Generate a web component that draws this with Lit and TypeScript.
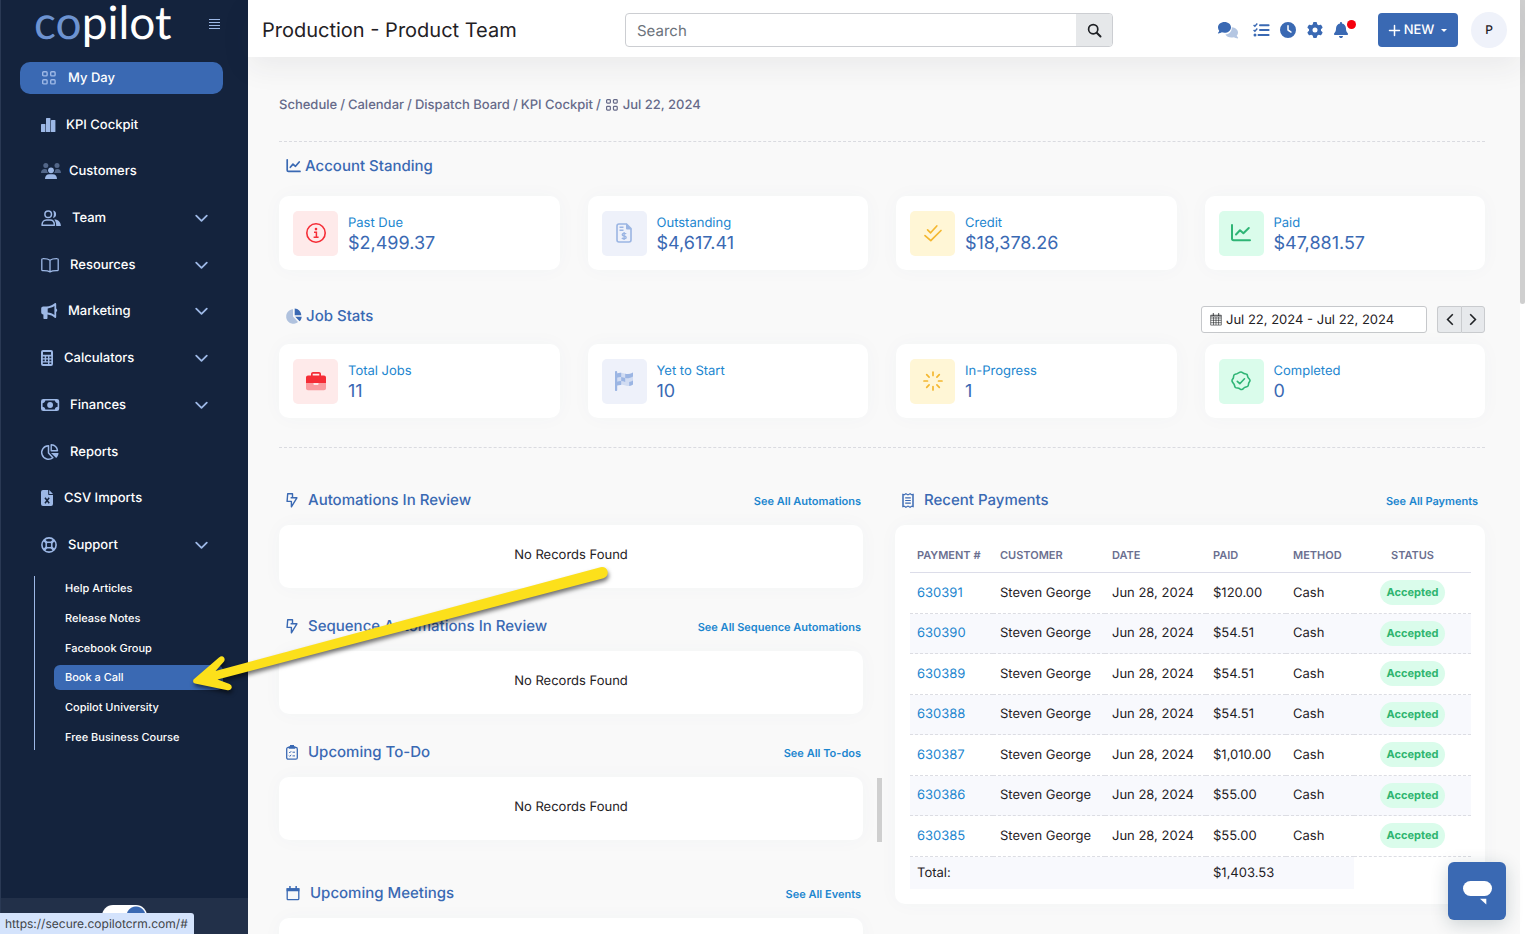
import { LitElement, html, svg, css, nothing, TemplateResult } from "lit";
import { customElement, property } from "lit/decorators.js";
import { classMap } from "lit/directives/class-map.js";

type Icon = { w: number; h: number; box?: string; art: TemplateResult };

const GRID = svg`<g fill="none" stroke="currentColor" stroke-width="1.4">
      <rect x="1.7" y="1.7" width="4.4" height="4.2" rx="1"/><rect x="9.7" y="1.7" width="4.4" height="4.2" rx="1"/>
      <rect x="1.7" y="9.7" width="4.4" height="4.2" rx="1"/><rect x="9.7" y="9.7" width="4.4" height="4.2" rx="1"/></g>`;

const ICONS: Record<string, Icon> = {
  grid: { w: 16, h: 16, art: GRID },
  gridSmall: { w: 12, h: 12, box: "1 1 14 14", art: GRID },
  bars: {
    w: 14, h: 16,
    art: svg`<g fill="currentColor"><rect x="0" y="7" width="4.4" height="8" rx=".5"/><rect x="5" y="1" width="4.4" height="14" rx=".5"/><rect x="10" y="3" width="4.4" height="12" rx=".5"/></g>`,
  },
  customers: {
    w: 17, h: 16,
    art: svg`<g fill="currentColor"><g opacity=".45"><circle cx="4.8" cy="2.6" r="2.5"/><circle cx="16" cy="2.6" r="2.5"/>
      <path d="M0 10c0-2.6 1.4-4 3.8-4 .9 0 1.8.3 2.3.8C5.9 8.200 6.500 9.300 7.200 10z"/><path d="M20 10c0-2.600-1.400-4-3.600-4-.9 0-1.800.3-2.300.8.200 1.400-.300 2.500-1.200 3.200z"/></g>
      <circle cx="10" cy="7.300" r="2.900"/><path d="M4 16c0-3 1.700-4.800 4.200-4.800h3.600c2.500 0 4.200 1.800 4.200 4.800z"/></g>`,
  },
  team: {
    w: 20, h: 16,
    art: svg`<circle cx="7.200" cy="4.200" r="3.300" fill="none" stroke="currentColor" stroke-width="1.500"/>
      <path d="M1 15.200c0-3.400 2.200-5.200 4.500-5.200h3.400c2.600 0 4.500 1.900 4.500 5.200z" fill="none" stroke="currentColor" stroke-width="1.500" stroke-linejoin="round"/>
      <path d="M12 .6a3.700 3.700 0 0 1 0 7.300c1.200-2.200 1.200-5 0-7.300zM13.200 9.400c3.700-.2 6.600 2.200 6.700 6.500h-4.700c0-2.900-.6-5-2-6.500z" fill="currentColor"/>`,
  },
  book: {
    w: 18, h: 16,
    art: svg`<path d="M9 3.200C7 1.800 4.500 1.600 1.700 1.700c-.6 0-.9.4-.9.900v10.200c0 .6.300.9.900.9 2.800-.1 5.300.1 7.300 1.200 2-1.100 4.500-1.300 7.300-1.200.6 0 .9-.3.900-.9V2.600c0-.5-.3-.9-.9-.9-2.800-.1-5.300.1-7.300 1.500zv11.500" fill="none" stroke="currentColor" stroke-width="1.300" stroke-linejoin="round"/>`,
  },
  horn: {
    w: 16, h: 16,
    art: svg`<path fill="currentColor" fill-rule="evenodd" d="M13.700.3c.7-.5 1.500-.1 1.500.7v4.600c.6.300 1 .9 1 1.700s-.4 1.400-1 1.700v5c0 .9-.8 1.200-1.500.7-2-1.700-4.300-2.900-7.200-3.200v3.500c0 .6-.4 1-1 1H3.400c-.6 0-1-.4-1-1v-3.600A2.100 2.100 0 0 1 .2 9.400V5.600c0-1.200.9-2.100 2.100-2.100h3.200c3.300 0 6-1.300 8.200-3.200zM13.400 3c-1.900 1.300-4.200 2.200-6.700 2.400v4.200c2.500.2 4.800 1.100 6.700 2.500z"/>`,
  },
  calc: {
    w: 12, h: 16,
    art: svg`<path fill="currentColor" fill-rule="evenodd" d="M2 0h8a2 2 0 0 1 2 2v12a2 2 0 0 1-2 2H2a2 2 0 0 1-2-2V2a2 2 0 0 1 2-2zM2 2v2.800h8V2zM1.800 6.500v1.700h1.900V6.500zM5.100 6.500v1.700H7V6.500zM8.400 6.500v1.700h1.900V6.500zM1.800 9.500v1.700h1.900V9.500zM5.100 9.500v1.700H7V9.500zM8.400 9.500v1.700h1.900V9.500zM1.800 12.500v1.600H7v-1.600zM8.400 12.500v1.600h1.900v-1.600z"/>`,
  },
  money: {
    w: 18, h: 16,
    art: svg`<rect x=".8" y="2.800" width="16.600" height="10.400" rx="1.500" fill="none" stroke="currentColor" stroke-width="1.600"/><circle cx="9.100" cy="8" r="2.900" fill="currentColor"/>
      <path fill="currentColor" d="M1 3h3.400C4.400 5 3 6.200 1 6.200zM17.200 3h-3.400c0 2 1.400 3.200 3.400 3.200zM1 13h3.400C4.400 11 3 9.800 1 9.800zM17.200 13h-3.400c0-2 1.400-3.200 3.400-3.200z"/>`,
  },
  pie: {
    w: 18, h: 16,
    art: svg`<path d="M7.500 1.700a6.800 6.800 0 1 0 4.400 12L7.500 9z" fill="none" stroke="currentColor" stroke-width="1.500" stroke-linejoin="round"/>
      <path d="M10.200.8c3.300.3 5.900 2.700 6.300 5.900h-6.300z" fill="none" stroke="currentColor" stroke-width="1.400" stroke-linejoin="round"/><path d="M10 9h7.500c-.1 2-.9 3.700-2.300 5.100z" fill="currentColor"/>`,
  },
  csv: {
    w: 12, h: 16,
    art: svg`<path fill="currentColor" d="M2 0h5.200v4c0 .6.400 1 1 1H12v9a2 2 0 0 1-2 2H2a2 2 0 0 1-2-2V2a2 2 0 0 1 2-2zM8.200 0 12 4H8.200z"/><path d="m4 7.700 4.200 5.600M8.200 7.700 4 13.300" stroke="#14233d" stroke-width="1.500"/>`,
  },
  life: {
    w: 16, h: 16,
    art: svg`<g fill="none" stroke="currentColor"><circle cx="8" cy="8" r="7.100" stroke-width="1.600"/><rect x="5.200" y="5.200" width="5.600" height="5.600" rx="1.500" stroke-width="1.500"/><path d="m2.800 2.800 3 3m4.400 4.400 3 3m0-10.400-3 3m-4.400 4.400-3 3" stroke-width="2.400"/></g>`,
  },
  chevron: { w: 13, h: 8, art: svg`<path d="m1.200 1.600 5.300 5.300 5.300-5.300" fill="none" stroke="currentColor" stroke-width="1.800" stroke-linecap="round" stroke-linejoin="round"/>` },
  menu: { w: 12, h: 12, art: svg`<path d="M0 1.500h11M0 4.500h11M0 7.500h11M0 10.500h11" stroke="currentColor" stroke-width="1.200"/>` },
  search: { w: 15, h: 15, art: svg`<circle cx="6.200" cy="6.200" r="4.600" fill="none" stroke="currentColor" stroke-width="1.700"/><path d="m9.700 9.700 3.800 3.800" stroke="currentColor" stroke-width="2" stroke-linecap="round"/>` },
  chats: {
    w: 20, h: 17,
    art: svg`<path fill="currentColor" opacity=".38" d="M13.800 5.200c3.500.2 6.200 2.500 6.200 5.200 0 1.200-.5 2.200-1.300 3.100.2.800.7 1.500 1.300 2.100.3.300.1.800-.3.800-1.400 0-2.700-.5-3.700-1.200-.8.300-1.700.4-2.600.4-2.700 0-5-1.300-6-3.100 3.700-.2 6.700-3.100 6.400-7.300z"/>
      <path fill="currentColor" d="M6.500 0c3.600 0 6.500 2.400 6.500 5.400s-2.900 5.400-6.500 5.400c-1 0-1.900-.2-2.700-.5-1 .7-2.200 1.200-3.500 1.200-.4 0-.5-.4-.3-.7.600-.6 1-1.300 1.200-2.100C.400 7.800 0 6.600 0 5.400 0 2.400 2.900 0 6.500 0z"/>`,
  },
  checklist: {
    w: 16, h: 14,
    art: svg`<path d="M7 2.200h8.600M7 7h8.600M5.500 11.900h10.100" stroke="currentColor" stroke-width="2" stroke-linecap="round"/><path d="m.6 1.900 1.300 1.300L4.300.5M.6 6.900l1.300 1.300 2.400-2.700" fill="none" stroke="currentColor" stroke-width="1.400"/><circle cx="2" cy="11.900" r="1.500" fill="currentColor"/>`,
  },
  clock: { w: 16, h: 16, box: "0 0 512 512", art: svg`<path fill="currentColor" fill-rule="evenodd" d="M256 0a256 256 0 1 1 0 512A256 256 0 1 1 256 0zM232 120V256c0 8 4 15.500 10.700 20l96 64c11 7.400 25.900 4.400 33.300-6.700s4.400-25.900-6.700-33.300L280 243.200V120c0-13.300-10.700-24-24-24s-24 10.700-24 24z"/>` },
  gear: { w: 16, h: 16, box: "0 0 512 512", art: svg`<path fill="currentColor" fill-rule="evenodd" d="M495.900 166.600c3.200 8.700 .5 18.400-6.400 24.600l-43.300 39.400c1.100 8.300 1.700 16.800 1.700 25.400s-.6 17.100-1.700 25.400l43.300 39.400c6.900 6.200 9.600 15.900 6.400 24.600c-4.400 11.900-9.700 23.300-15.800 34.300l-4.700 8.100c-6.600 11-14 21.400-22.100 31.200c-5.900 7.200-15.700 9.600-24.500 6.800l-55.700-17.700c-13.400 10.300-28.200 18.900-44 25.400l-12.500 57.100c-2 9.100-9 16.300-18.200 17.800c-13.800 2.300-28 3.500-42.500 3.500s-28.700-1.200-42.500-3.500c-9.200-1.500-16.200-8.700-18.200-17.800l-12.500-57.100c-15.800-6.500-30.600-15.100-44-25.400L83.100 425.900c-8.800 2.800-18.600 .3-24.500-6.800c-8.100-9.800-15.500-20.200-22.100-31.200l-4.700-8.100c-6.100-11-11.400-22.400-15.800-34.300c-3.200-8.700-.5-18.400 6.400-24.600l43.300-39.400C64.600 273.100 64 264.600 64 256s.6-17.100 1.700-25.400L22.400 191.200c-6.900-6.200-9.600-15.900-6.400-24.600c4.400-11.900 9.700-23.300 15.800-34.300l4.700-8.100c6.600-11 14-21.400 22.100-31.200c5.900-7.200 15.700-9.600 24.500-6.800l55.700 17.700c13.400-10.300 28.200-18.900 44-25.400l12.500-57.100c2-9.100 9-16.300 18.200-17.800C227.300 1.200 241.500 0 256 0s28.700 1.200 42.500 3.500c9.200 1.500 16.200 8.700 18.200 17.800l12.500 57.100c15.800 6.500 30.600 15.100 44 25.400l55.700-17.700c8.800-2.800 18.600-.3 24.500 6.800c8.100 9.800 15.500 20.200 22.100 31.200l4.700 8.100c6.100 11 11.400 22.400 15.800 34.300zM256 336a80 80 0 1 0 0-160 80 80 0 1 0 0 160z"/>` },
  bell: { w: 14, h: 16, box: "0 0 448 512", art: svg`<path fill="currentColor" d="M224 0c-17.700 0-32 14.300-32 32V51.200C119 66 64 130.600 64 208v18.800c0 47-17.300 92.400-48.500 127.600l-7.400 8.300c-8.400 9.400-10.400 22.900-5.300 34.400S19.400 416 32 416H416c12.600 0 24-7.400 29.200-18.900s3.100-25-5.300-34.400l-7.400-8.300C401.300 319.200 384 273.900 384 226.800V208c0-77.400-55-142-128-156.800V32c0-17.700-14.300-32-32-32zm45.300 493.300c12-12 18.700-28.300 18.700-45.300H224 160c0 17 6.700 33.300 18.700 45.300s28.300 18.700 45.300 18.700s33.300-6.700 45.300-18.700z"/>` },
  plus: { w: 11, h: 11, art: svg`<path d="M5.500.5v10M.5 5.500h10" stroke="currentColor" stroke-width="1.500" stroke-linecap="round"/>` },
  caret: { w: 6, h: 3, art: svg`<path d="M0 0h6L3 3z" fill="currentColor"/>` },
  chart: {
    w: 15, h: 14,
    art: svg`<path d="M1.200.8v10.400c0 .8.500 1.200 1.200 1.200H14M4.300 8.300l2.700-3.200 2.500 2.200 3.700-4.300" fill="none" stroke="currentColor" stroke-width="1.700" stroke-linecap="round" stroke-linejoin="round"/>`,
  },
  chartLarge: {
    w: 20, h: 18,
    art: svg`<path d="M1 1v13.600c0 1 .6 1.600 1.600 1.600H19M5 10.500l4-4.200 3.400 3L17.800 4" fill="none" stroke="currentColor" stroke-width="2" stroke-linecap="round" stroke-linejoin="round"/>`,
  },
  pieDuo: {
    w: 16, h: 16,
    art: svg`<path d="M7 1.300A7.200 7.200 0 1 0 12 14L7 8.500z" fill="currentColor" opacity=".38"/><path d="M8.700.5c3.600.3 6.300 2.800 6.600 6.700H8.700zM9.200 8.700h6.500c-.1 1.900-.9 3.400-2.100 4.600z" fill="currentColor"/>`,
  },
  info: {
    w: 20, h: 20,
    art: svg`<circle cx="10" cy="10" r="9.200" fill="none" stroke="currentColor" stroke-width="1.600"/><circle cx="10" cy="6.100" r="1.300" fill="currentColor"/><path d="M8 9.200h2.400v5M7.600 14.200h5" fill="none" stroke="currentColor" stroke-width="1.500"/>`,
  },
  invoice: {
    w: 16, h: 20,
    art: svg`<path d="M3 1h7.500L15 5.500V17a2 2 0 0 1-2 2H3a2 2 0 0 1-2-2V3a2 2 0 0 1 2-2z" fill="none" stroke="currentColor" stroke-width="1.600"/><path d="M10 .6 15.600 6.500H11a1 1 0 0 1-1-1zM3.500 3.600h4v1.400h-4zM3.500 6.500h4v1.400h-4z" fill="currentColor"/>
      <path d="M10.200 10.900c-.5-.6-4-.9-4 .8 0 1.700 4 .9 4 2.700 0 1.700-3.500 1.500-4.400.6M8.100 9v8" fill="none" stroke="currentColor" stroke-width="1.300"/>`,
  },
  checks: { w: 18, h: 17, art: svg`<path d="m3.600 4.800 3 3L12.800 1M1 10.600l5.800 5L17 5.500" fill="none" stroke="currentColor" stroke-width="1.700" stroke-linecap="round" stroke-linejoin="round"/>` },
  briefcase: {
    w: 20, h: 20,
    art: svg`<path d="M0 12h7.500v1.100c0 .6.400 1 1 1h3c.6 0 1-.4 1-1V12H20v5.300c0 1.100-.9 2-2 2H2c-1.100 0-2-.9-2-2z" fill="currentColor" opacity=".42"/><path fill="currentColor" fill-rule="evenodd" d="M5 4.500V3c0-1.100.9-2 2-2h6c1.100 0 2 .9 2 2v1.500h3c1.100 0 2 .9 2 2V12H0V6.500c0-1.100.9-2 2-2zm1.700 0h6.600V2.700H6.700z"/>`,
  },
  flag: {
    w: 18, h: 20,
    art: svg`<path d="M2 2.500c3-1.400 5-.900 7.500 0s4.500 1 8.500-1v12c-3 1.800-5.500 1.900-8.300.8-2.600-1-4.700-1.100-7.700.2z" fill="currentColor" opacity=".35"/>
      <path d="M1 0c.7 0 1.200.5 1.200 1.100V19c0 .6-.5 1.100-1.200 1.100S0 19.600 0 19V1.100C0 .5.300 0 1 0zM2 2.500c1.600-.8 3-.9 4.200-.8v4.200C4.800 5.800 3.500 6 2 6.700zM6.200 5.900c1.500.1 2.600.6 4 1.100v4.100c-1.300-.5-2.600-.9-4-1zM10.200 2.700c1.300.4 2.600.5 4 .1v4.300c-1.400.4-2.700.3-4-.1zM14.200 7.100c1.200-.3 2.400-.8 3.800-1.500V1.500c-1.300.7-2.600 1.200-3.800 1.400zM2 10.700c1.400-.5 2.700-.8 4.200-.7v3.900c-1.500-.1-2.700.1-4.200.7zM14.200 11.100c1.300-.3 2.500-.8 3.800-1.500v3.900c-1.300.8-2.600 1.300-3.800 1.500z" fill="currentColor"/>`,
  },
  burst: {
    w: 20, h: 20,
    art: svg`<path d="M10 1v3.500M10 15.500V19M1 10h3.500M15.500 10H19M3.700 3.700l2.400 2.400M13.900 13.900l2.400 2.400M3.700 16.300l2.400-2.400M13.900 6.100l2.400-2.400" stroke="currentColor" stroke-width="1.700" stroke-linecap="round"/>`,
  },
  verified: {
    w: 20, h: 20,
    art: svg`<path d="M10 1c1.200 0 1.900 1 2.900 1.400s2.300.2 3 1 .6 2 1.100 3 1.800 1.800 2 2.900-1 1.900-1.300 2.900-.1 2.300-.9 3.100-2.100.6-3.100 1.100-1.700 1.900-2.900 2.100-2-.9-3-1.300-2.500.1-3.400-.7-.7-2-1.200-3S1.200 11.200 1 10s.9-1.900 1.300-2.900.1-2.500.9-3.300 2.100-.7 3.100-1.200S8.800 1 10 1z" fill="none" stroke="currentColor" stroke-width="1.600"/><path d="m6.300 10.300 2.500 2.400 4.700-4.900" fill="none" stroke="currentColor" stroke-width="1.600" stroke-linecap="round" stroke-linejoin="round"/>`,
  },
  calendarGrid: {
    w: 12, h: 13,
    art: svg`<path d="M.7 2.200h10.600v9.900H.7zM.7 5h10.600M.7 7.300h10.600M.7 9.700h10.600M3.500 4v8M6 4v8M8.600 4v8" fill="none" stroke="currentColor" stroke-width=".6"/><path d="M3.300 0v3M8.700 0v3M.7 3h10.600" stroke="currentColor" stroke-width=".8"/>`,
  },
  prev: { w: 8, h: 13, art: svg`<path d="M6.800 1.300 1.600 6.500l5.200 5.200" fill="none" stroke="currentColor" stroke-width="1.600"/>` },
  next: { w: 8, h: 13, art: svg`<path d="m1.200 1.300 5.200 5.200-5.200 5.200" fill="none" stroke="currentColor" stroke-width="1.600"/>` },
  bolt: { w: 12, h: 15, art: svg`<path d="M1.700.8h4.800v4h4.400L5.400 13.800V8.400H1.100zM6.500 4.800H4.600" fill="none" stroke="currentColor" stroke-width="1.400" stroke-linejoin="round"/>` },
  clip: {
    w: 12, h: 15,
    art: svg`<rect x=".7" y="2.400" width="10.600" height="11.800" rx="1.500" fill="none" stroke="currentColor" stroke-width="1.300"/><path d="M4 0h4v1.200h1.300v2.600H2.700V1.200H4z" fill="currentColor"/><path d="m3 7 .8.800L5.200 6.200M6.500 7.200H9M3 10.600l.8.800 1.400-1.600M6.500 10.900H9" fill="none" stroke="currentColor"/>`,
  },
  calendar: { w: 14, h: 15, art: svg`<path d="M1.200 3h11.600v9.700c0 .6-.4 1-1 1H2.200c-.6 0-1-.4-1-1z" fill="none" stroke="currentColor" stroke-width="1.300"/><path d="M.6 2.300h12.800v2.900H.6zM3.200 0h1.500v3H3.200zM9.400 0h1.500v3H9.400z" fill="currentColor"/>` },
  receipt: {
    w: 12, h: 15,
    art: svg`<path d="M1 1.200v12.600M11 1.200v12.600" stroke="currentColor" stroke-width="1.500"/><path d="m.4.900 1.700 1L3.900.7l2.100 1.200L8.100.7l1.800 1.200 1.700-1M.4 14.100l1.700-1 1.800 1.200L6 13.100l2.100 1.200 1.800-1.200 1.700 1M3.200 4.900h5.600M3.200 7.500h5.600M3.200 10.100h5.600" fill="none" stroke="currentColor" stroke-width="1.100"/>`,
  },
  bubble: { w: 29, h: 24, art: svg`<rect x="0" y="0" width="29" height="15" rx="7.500" fill="currentColor"/><path d="M17 17.700h6.300v5.800z" fill="currentColor"/>` },
};

@customElement("ui-icon")
class UiIcon extends LitElement {
  @property() name = "";
  static styles = css`
    :host { display: inline-flex; flex: none; }
    svg { display: block; overflow: visible; }
  `;
  render() {
    const i = ICONS[this.name];
    return i
      ? html`<svg width=${i.w} height=${i.h} viewBox=${i.box ?? `0 0 ${i.w} ${i.h}`} aria-hidden="true">${i.art}</svg>`
      : nothing;
  }
}

const NAV = [
  { icon: "grid", label: "My Day", active: true },
  { icon: "bars", label: "KPI Cockpit" },
  { icon: "customers", label: "Customers" },
  { icon: "team", label: "Team", sub: true },
  { icon: "book", label: "Resources", sub: true },
  { icon: "horn", label: "Marketing", sub: true },
  { icon: "calc", label: "Calculators", sub: true },
  { icon: "money", label: "Finances", sub: true },
  { icon: "pie", label: "Reports" },
  { icon: "csv", label: "CSV Imports" },
  { icon: "life", label: "Support", sub: true },
];
const SUPPORT = ["Help Articles", "Release Notes", "Facebook Group", "Book a Call", "Copilot University", "Free Business Course"];

const ACCOUNT = [
  { tone: "red", icon: "info", label: "Past Due", value: "$2,499.37" },
  { tone: "blue", icon: "invoice", label: "Outstanding", value: "$4,617.41" },
  { tone: "yellow", icon: "checks", label: "Credit", value: "$18,378.26" },
  { tone: "green", icon: "chartLarge", label: "Paid", value: "$47,881.57" },
];
const JOBS = [
  { tone: "red", icon: "briefcase", label: "Total Jobs", value: "11" },
  { tone: "blue", icon: "flag", label: "Yet to Start", value: "10" },
  { tone: "yellow", icon: "burst", label: "In-Progress", value: "1" },
  { tone: "green", icon: "verified", label: "Completed", value: "0" },
];
const PANELS = [
  { icon: "bolt", title: "Automations In Review", link: "See All Automations", note: "No Records Found" },
  { icon: "bolt", title: "Sequence Automations In Review", link: "See All Sequence Automations", note: "No Records Found" },
  { icon: "clip", title: "Upcoming To-Do", link: "See All To-dos", note: "No Records Found" },
  { icon: "calendar", title: "Upcoming Meetings", link: "See All Events", note: "" },
];
const PAYMENTS = [
  ["630391", "$120.00"], ["630390", "$54.51"], ["630389", "$54.51"], ["630388", "$54.51"],
  ["630387", "$1,010.00"], ["630386", "$55.00"], ["630385", "$55.00"],
];

@customElement("app-root")
class AppRoot extends LitElement {
  static styles = css`
    :host {
      --navy: #14233d; --blue: #3a69b3; --sky: #1c86cf; --soft: #9db8e6; --ink: #1f2125;
      display: flex; height: 100vh; overflow: hidden; background: #f9f9f9;
      font: 13px/20px Inter, "Liberation Sans", sans-serif; color: var(--ink);
      text-rendering: geometricPrecision;
    }
    *, *::before, *::after { box-sizing: border-box; }
    a { color: inherit; text-decoration: none; }
    button, input { font: inherit; color: inherit; text-rendering: inherit; margin: 0; padding: 0; border: 0; background: none; border-radius: 0; }
    ul { list-style: none; margin: 0; padding: 0; }
    h1, h2 { margin: 0; font-weight: 500; }

    .side { flex: 0 0 248px; display: flex; flex-direction: column; background: var(--navy); color: #fff; border-left: 1px solid #2a3954; }
    .brand { display: flex; justify-content: space-between; padding: 0 27px 0 33px; height: 62px; }
    .logo { font: 400 46px/44px Lato, sans-serif; }
    .logo-co { color: #6d93d1; }
    .fold { color: var(--soft); height: 48px; display: flex; align-items: center; }
    .nav { display: flex; flex-direction: column; justify-content: space-between; min-height: 499px; padding: 0 25px 0 19px; }
    .nav-link { display: flex; align-items: center; gap: 11px; height: 32px; padding: 0 15px 0 21px; border-radius: 10px; font-weight: 500; }
    .nav-link ui-icon { color: var(--soft); }
    .nav-link .end { margin-left: auto; }
    .nav-link.active { background: var(--blue); }
    .sub { display: flex; flex-direction: column; justify-content: space-between; min-height: 174px; margin: 15px 25px 0 33px; padding-left: 19px; border-left: 1px solid var(--soft); font-size: 11px; font-weight: 500; }
    .sub-link { display: block; padding: 0 11px; line-height: 25px; border-radius: 6px; }
    .sub-link.active { background: var(--blue); }
    .side-foot { margin-top: auto; height: 36px; padding-top: 7px; background: #223049; display: flex; justify-content: center; }
    .switch { appearance: none; width: 45px; height: 22px; border-radius: 11px; background: #fff radial-gradient(circle at 34px 11px, #fff 2px, var(--blue) 3px, var(--blue) 9px, transparent 10px); }

    .main { flex: 1; min-width: 0; display: flex; flex-direction: column; }
    .top { flex: none; height: 57px; padding: 3px 13px 0 14px; background: #fff; box-shadow: 0 10px 30px rgba(40, 42, 53, 0.07); position: relative; display: grid; grid-template-columns: 363fr 488fr 394fr; align-items: center; }
    .title { font-size: 20px; line-height: 28px; font-weight: 400; }
    .search { display: flex; height: 34px; border: 1px solid #ccced2; border-radius: 4px; overflow: hidden; }
    .search-box { flex: 1; min-width: 0; padding: 1px 11px 0; font-size: 15px; outline: none; }
    .search-box::placeholder { color: #6c737b; opacity: 1; }
    .search-go { width: 36px; background: #e6e8ea; display: grid; place-items: center; }
    .tools { display: flex; align-items: center; justify-content: flex-end; color: var(--blue); }
    .tool { display: flex; margin-right: 11px; position: relative; }
    .tool.first { margin-right: 15px; }
    .tool.last { margin-right: 30px; }
    .dot { position: absolute; right: -8px; top: -2px; width: 9px; height: 9px; border-radius: 50%; background: #f5000d; }
    .new { display: flex; align-items: center; justify-content: center; gap: 4px; width: 80px; height: 34px; border-radius: 4px; background: var(--blue); color: #fff; font-weight: 500; }
    .new .caret { margin-left: 3px; }
    .avatar { width: 36px; height: 36px; margin-left: 13px; border-radius: 50%; background: #eff2fa; color: var(--ink); font-size: 12px; font-weight: 500; }

    .page { padding: 38px 35px 0 31px; }
    .crumbs { display: flex; align-items: center; gap: 3px; font-size: 13px; font-weight: 500; color: #666a89; padding-bottom: 26px; }
    .crumbs ui-icon { margin: 0 2px; }
    .rule { border: 0; border-top: 1px dashed #dadbe0; margin: 0; }
    .band { display: flex; align-items: flex-start; justify-content: space-between; height: 27px; padding-left: 7px; }
    .band.first { margin: 14px 0 13px; }
    .band.second { margin: 36px 0 11px; }
    .heading { display: flex; align-items: center; gap: 4px; font-size: 15px; color: var(--blue); }
    .cards { display: grid; grid-template-columns: repeat(4, minmax(0, 1fr)); gap: 28px; }
    .card { background: #fff; border-radius: 10px; box-shadow: 0 0 20px rgba(76, 87, 125, 0.03); }
    .stat { display: flex; align-items: center; gap: 10px; height: 74px; padding: 0 14px; }
    .tile { width: 45px; height: 45px; border-radius: 5px; display: grid; place-items: center; }
    .red { background: #feeaea; color: #f52d36; }
    .blue { background: #eef1fa; color: #9bb5e3; }
    .yellow { background: #fff6d6; color: #f4b72f; }
    .green { background: #dafceb; color: #2eb575; }
    .label { color: var(--sky); padding-top: 1px; }
    .value { font-size: 18px; line-height: 22px; color: var(--blue); }
    .range { display: flex; gap: 10px; }
    .date { display: flex; align-items: center; gap: 4px; width: 226px; height: 27px; padding: 0 8px; background: #fff; border: 1px solid #c6c8cb; border-radius: 3px; }
    .date-box { flex: 1; min-width: 0; outline: none; }
    .steps { display: flex; }
    .step { width: 24px; height: 27px; display: grid; place-items: center; background: #e7e9ec; border: 1px solid #c9cbce; }
    .step:first-child { border-radius: 3px 0 0 3px; border-right: 0; }
    .step:last-child { border-radius: 0 3px 3px 0; }
    .after { margin-top: 29px; }

    .columns { display: grid; grid-template-columns: minmax(0, 603fr) minmax(0, 590fr); gap: 13px; padding-top: 40px; align-items: start; }
    .left { display: flex; gap: 14px; }
    .panels { flex: 1; min-width: 0; }
    .thumb { width: 5px; height: 64px; margin-top: 290px; background: #cfcfcf; }
    .panel { margin-bottom: 26px; }
    .panel:nth-child(3) { margin-bottom: 41px; }
    .panel-head { display: flex; align-items: center; justify-content: space-between; height: 24px; margin-bottom: 13px; padding: 0 2px 0 7px; }
    .panel-head .heading { gap: 10px; }
    .right .panel-head { padding: 0 7px; }
    .more { font-size: 11px; font-weight: 600; color: var(--sky); padding-top: 2px; }
    .empty { height: 63px; padding-bottom: 3px; display: grid; place-items: center; }
    .pay { padding: 14px 14px 15px 15px; }
    table { width: 100%; table-layout: fixed; border-collapse: separate; border-spacing: 0; }
    th, td { padding: 0 7px 1px; text-align: left; white-space: nowrap; }
    th { height: 34px; font-size: 11px; font-weight: 600; color: #6b6f90; border-bottom: 1px solid #dcdde9; }
    tbody td { height: 41px; border-bottom: 1px dashed #dcdde3; }
    tbody tr:nth-child(even) td { height: 40px; background: #f8f9fd; }
    tfoot td { height: 32px; }
    tfoot .fill { background: #f8f9fd; }
    .c1 { width: 83px; } .c2 { width: 112px; } .c3 { width: 101px; } .c4 { width: 80px; } .c5 { width: 68px; }
    .mid { text-align: center; }
    .id { color: var(--sky); }
    .badge { display: inline-block; padding: 0 7px; line-height: 25px; border-radius: 13px; font-size: 11px; font-weight: 700; color: #2eb56f; background: #dafceb; vertical-align: middle; }

    .scroll { flex: 0 0 5px; background: #fff; }
    .scroll-thumb { height: 304px; background: #cfcfcf; border-radius: 0 0 3px 3px; }
    .chat { position: fixed; right: 19px; bottom: 14px; width: 58px; height: 58px; border-radius: 6px; background: var(--blue); color: #fff; display: grid; place-items: center; padding-top: 4px; box-shadow: 0 4px 18px rgba(20, 50, 60, 0.2); }
    .status { position: fixed; left: 0; bottom: 0; height: 21px; padding: 0 6px 0 5px; background: #d4e3fc; color: #3f4347; font-size: 12px; line-height: 21px; border-radius: 0 3px 0 0; }
    .pointer { position: fixed; left: 180px; top: 550px; pointer-events: none; filter: drop-shadow(1px 3px 2px rgba(0, 0, 0, 0.55)); overflow: visible; }
  `;

  private stats(items: typeof ACCOUNT) {
    return html`<div class="cards">
      ${items.map((s) => html`<div class="card stat">
        <div class=${classMap({ tile: true, [s.tone]: true })}><ui-icon name=${s.icon}></ui-icon></div>
        <div><div class="label">${s.label}</div><div class="value">${s.value}</div></div>
      </div>`)}
    </div>`;
  }

  private head(icon: string, title: string, link: string) {
    return html`<div class="panel-head">
      <h2 class="heading"><ui-icon name=${icon}></ui-icon>${title}</h2><a class="more" href="#">${link}</a>
    </div>`;
  }

  render() {
    return html`
      <aside class="side">
        <div class="brand">
          <a class="logo" href="#"><span class="logo-co">co</span>pilot</a>
          <button class="fold" aria-label="Collapse menu"><ui-icon name="menu"></ui-icon></button>
        </div>
        <nav class="nav">
          ${NAV.map((n) => html`<a href="#" class=${classMap({ "nav-link": true, active: !!n.active })}>
            <ui-icon name=${n.icon}></ui-icon>${n.label}${n.sub ? html`<ui-icon class="end" name="chevron"></ui-icon>` : nothing}
          </a>`)}
        </nav>
        <ul class="sub">
          ${SUPPORT.map((s) => html`<li><a href="#" class=${classMap({ "sub-link": true, active: s === "Book a Call" })}>${s}</a></li>`)}
        </ul>
        <div class="side-foot"><input class="switch" type="checkbox" aria-label="Light theme" checked /></div>
      </aside>

      <div class="main">
        <header class="top">
          <h1 class="title">Production - Product Team</h1>
          <form class="search">
            <input class="search-box" type="text" placeholder="Search" aria-label="Search" />
            <button class="search-go" type="button" aria-label="Go"><ui-icon name="search"></ui-icon></button>
          </form>
          <div class="tools">
            <button class="tool first" aria-label="Messages"><ui-icon name="chats"></ui-icon></button>
            <button class="tool" aria-label="Tasks"><ui-icon name="checklist"></ui-icon></button>
            <button class="tool" aria-label="Time"><ui-icon name="clock"></ui-icon></button>
            <button class="tool" aria-label="Settings"><ui-icon name="gear"></ui-icon></button>
            <button class="tool last" aria-label="Notifications"><ui-icon name="bell"></ui-icon><span class="dot"></span></button>
            <button class="new"><ui-icon name="plus"></ui-icon>NEW<ui-icon class="caret" name="caret"></ui-icon></button>
            <button class="avatar">P</button>
          </div>
        </header>

        <main class="page">
          <nav class="crumbs">
            <a href="#">Schedule</a>/<a href="#">Calendar</a>/<a href="#">Dispatch Board</a>/<a href="#">KPI Cockpit</a>/
            <ui-icon name="gridSmall"></ui-icon><span>Jul 22, 2024</span>
          </nav>
          <hr class="rule" />
          <div class="band first"><h2 class="heading"><ui-icon name="chart"></ui-icon>Account Standing</h2></div>
          ${this.stats(ACCOUNT)}
          <div class="band second">
            <h2 class="heading"><ui-icon name="pieDuo"></ui-icon>Job Stats</h2>
            <div class="range">
              <label class="date"><ui-icon name="calendarGrid"></ui-icon><input class="date-box" type="text" aria-label="Date range" value="Jul 22, 2024 - Jul 22, 2024" /></label>
              <div class="steps">
                <button class="step" aria-label="Previous"><ui-icon name="prev"></ui-icon></button>
                <button class="step" aria-label="Next"><ui-icon name="next"></ui-icon></button>
              </div>
            </div>
          </div>
          ${this.stats(JOBS)}
          <hr class="rule after" />

          <div class="columns">
            <div class="left">
              <div class="panels">
                ${PANELS.map((p) => html`<section class="panel">${this.head(p.icon, p.title, p.link)}<div class="card empty">${p.note}</div></section>`)}
              </div>
              <div class="thumb"></div>
            </div>
            <section class="right">
              ${this.head("receipt", "Recent Payments", "See All Payments")}
              <div class="card pay">
                <table>
                  <thead><tr>
                    <th class="c1">PAYMENT #</th><th class="c2">CUSTOMER</th><th class="c3">DATE</th><th class="c4">PAID</th><th class="c5">METHOD</th><th class="mid">STATUS</th>
                  </tr></thead>
                  <tbody>
                    ${PAYMENTS.map(([id, paid]) => html`<tr>
                      <td><a class="id" href="#">${id}</a></td><td>Steven George</td><td>Jun 28, 2024</td><td>${paid}</td><td>Cash</td>
                      <td class="mid"><span class="badge">Accepted</span></td>
                    </tr>`)}
                  </tbody>
                  <tfoot><tr><td class="fill" colspan="3">Total:</td><td class="fill">$1,403.53</td><td class="fill"></td><td></td></tr></tfoot>
                </table>
              </div>
            </section>
          </div>
        </main>
      </div>
      <div class="scroll"><div class="scroll-thumb"></div></div>

      <button class="chat" aria-label="Chat"><ui-icon name="bubble"></ui-icon></button>
      <svg class="pointer" width="440" height="150" viewBox="180 550 440 150" aria-hidden="true">
        <path fill="#fce01b" d="M193.500 679.500 219 657.500q3-2.500 5 0 1.300 2 0 4L215.500 671 600.500 567.200q5.500-.8 7 3.800 1.200 5-4 7.200L217.500 679.500 229.500 684q3 1.500 2 4.300-1.300 2.500-4 1.900L195 683.500q-2.800-1-1.500-4z" />
      </svg>
      <div class="status">https://secure.copilotcrm.com/#</div>
    `;
  }
}
